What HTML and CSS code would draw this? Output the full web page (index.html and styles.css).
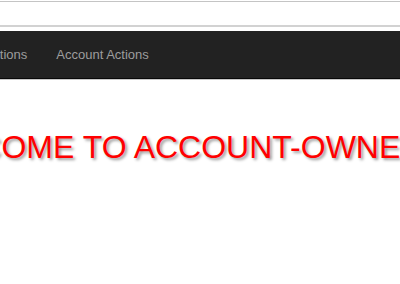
FILE: index.html
```html
<!DOCTYPE html>
<html>
<head>
<meta charset="utf-8">
<link rel="stylesheet" href="styles.css">
</head>
<body>
<div class="topbar"></div>
<nav class="navbar">
  <ul class="nav-links">
    <li><a href="#">Owner Actions</a></li>
    <li><a href="#">Account Actions</a></li>
  </ul>
</nav>
<main class="content">
  <h1 class="welcome">WELCOME TO ACCOUNT-OWNER</h1>
</main>
</body>
</html>
```
FILE: styles.css
```css
html, body {
  margin: 0;
  padding: 0;
  background: #fff;
  overflow: hidden;
}
body {
  font-family: "Liberation Sans", Arial, sans-serif;
  width: 400px;
  height: 284px;
}
.topbar {
  margin-top: 1px;
  height: 23px;
  border-top: 1px solid #c4c4c4;
  border-bottom: 2px solid #d2d2d2;
  background: #fff;
}
.navbar {
  margin-top: 4px;
  height: 47px;
  background: #222;
  border-bottom: 1px solid #080808;
  box-shadow: 0 1px 0 #c8c8c8;
  display: flex;
  align-items: center;
  overflow: hidden;
}
.nav-links {
  list-style: none;
  margin: 0 0 0 -71px;
  padding: 0;
  display: flex;
  white-space: nowrap;
}
.nav-links a {
  display: block;
  padding: 0 14.5px;
  color: #9d9d9d;
  font-size: 13px;
  line-height: 47px;
  text-decoration: none;
}
.content {
  overflow: hidden;
}
.welcome {
  margin: 50px 0 0 -91px;
  font-size: 32px;
  line-height: 36px;
  font-weight: normal;
  color: #ff0000;
  white-space: nowrap;
  text-shadow: 2px 2px 3px #9a9a9a;
}
```
